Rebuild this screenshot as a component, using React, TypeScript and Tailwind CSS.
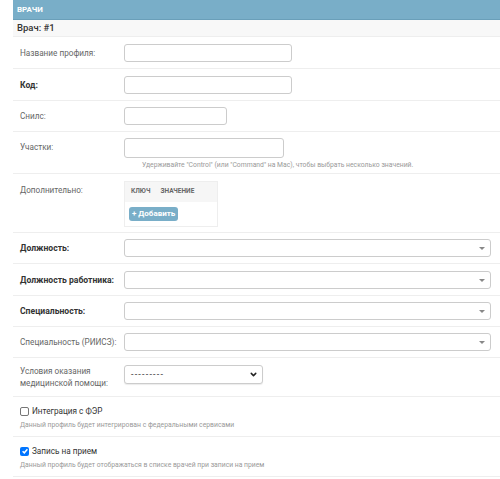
import { ChevronDown } from "lucide-react"

const font = { fontFamily: "Roboto, 'Liberation Sans', sans-serif" }

function Row({ label, bold, children, className = "" }: { label: string; bold?: boolean; children: React.ReactNode; className?: string }) {
  return (
    <div className={`flex border-b border-[#eee] pl-[7px] ${className}`}>
      <label className={`w-[104px] shrink-0 leading-[18px] ${bold ? "text-[8.6px] font-bold text-[#333]" : "text-[8.2px] text-[#666]"}`}>
        {label}
      </label>
      <div className="flex-1 pr-[9px]">{children}</div>
    </div>
  )
}

function TextInput({ w }: { w: string }) {
  return <div className={`h-[18px] rounded-[3px] border border-[#ccc] bg-white ${w}`} />
}

function Select() {
  return (
    <div className="flex h-[18px] items-center justify-end rounded-[3px] border border-[#ccc] bg-white pr-[5px]">
      <span className="h-0 w-0 border-x-[3px] border-t-[3px] border-x-transparent border-t-[#888]" />
    </div>
  )
}

export default function App() {
  return (
    <div className="min-h-[479px] bg-white pl-[13px]" style={font}>
      <h2 className="h-[20px] border-b border-[#6a9fb9] bg-[#79aec8] pl-[4px] text-[8px] font-bold uppercase leading-[19px] text-white">
        Врачи
      </h2>
      <div className="h-[17px] border-b border-[#eee] bg-[#f8f8f8] pl-[4px] text-[9.5px] font-medium leading-[16px] text-[#333]">
        Врач: #1
      </div>

      <Row label="Название профиля:" className="pb-[6px] pt-[7px]">
        <TextInput w="w-[168px]" />
      </Row>
      <Row label="Код:" bold className="pb-[6px] pt-[7px]">
        <TextInput w="w-[168px]" />
      </Row>
      <Row label="Снилс:" className="py-[6px]">
        <TextInput w="w-[103px]" />
      </Row>
      <Row label="Участки:" className="pb-[3px] pt-[6px]">
        <div className="h-[20px] w-[160px] rounded-[3px] border border-[#ccc] bg-white" />
        <p className="ml-[18px] mt-[2px] text-[6.8px] leading-[10px] text-[#999]">
          Удерживайте "Control" (или "Command" на Mac), чтобы выбрать несколько значений.
        </p>
      </Row>
      <Row label="Дополнительно:" className="pb-[5px] pt-[7px]">
        <div className="w-[94px] border border-[#eee]">
          <div className="flex h-[20px] items-center gap-[10px] bg-[#f6f6f6] pl-[6px] text-[6.5px] font-bold uppercase text-[#666]">
            <span>Ключ</span>
            <span>Значение</span>
          </div>
          <div className="flex px-[4px] py-[5px]">
            <button className="h-[14px] rounded-[3px] bg-[#79aec8] px-[3px] text-[8px] font-bold leading-[14px] text-white">
              + Добавить
            </button>
          </div>
        </div>
      </Row>
      <Row label="Должность:" bold className="py-[6px]">
        <Select />
      </Row>
      <Row label="Должность работника:" bold className="pb-[6px] pt-[7px]">
        <Select />
      </Row>
      <Row label="Специальность:" bold className="py-[6px]">
        <Select />
      </Row>
      <Row label="Специальность (РИИСЗ):" className="py-[6px]">
        <Select />
      </Row>
      <div className="flex border-b border-[#eee] pb-[7px] pl-[7px] pt-[6px]">
        <label className="w-[104px] shrink-0 pt-[1px] text-[8.2px] leading-[12px] text-[#666]">
          Условия оказания медицинской помощи:
        </label>
        <div className="mt-[1px] flex h-[19px] w-[139px] items-center justify-between rounded-[3px] border border-[#ccc] bg-white pl-[6px] pr-[4px] text-[9px] text-[#333] shadow-[0_1px_1px_rgba(0,0,0,0.08)]">
          <span className="tracking-[1.2px]">---------</span>
          <ChevronDown className="h-[9px] w-[9px] text-[#222]" strokeWidth={4} />
        </div>
      </div>
      <div className="border-b border-[#eee] pb-[6px] pl-[7px] pt-[8px]">
        <label className="flex items-center gap-[3px] text-[8.2px] leading-[12px] text-[#333]">
          <span className="h-[9px] w-[9px] rounded-[2px] border border-[#767676] bg-white" />
          Интеграция с ФЭР
        </label>
        <p className="mt-[3px] text-[6.8px] leading-[10px] text-[#999]">
          Данный профиль будет интегрирован с федеральными сервисами
        </p>
      </div>
      <div className="border-b border-[#eee] pb-[6px] pl-[7px] pt-[8px]">
        <label className="flex items-center gap-[3px] text-[8.2px] leading-[12px] text-[#333]">
          <span className="flex h-[9px] w-[9px] items-center justify-center rounded-[2px] bg-[#0075ff]">
            <svg viewBox="0 0 10 10" className="h-[8px] w-[8px]">
              <path d="M2 5.2 L4.1 7.3 L8 2.8" fill="none" stroke="white" strokeWidth="1.8" />
            </svg>
          </span>
          Запись на прием
        </label>
        <p className="mt-[3px] text-[6.8px] leading-[10px] text-[#999]">
          Данный профиль будет отображаться в списке врачей при записи на прием
        </p>
      </div>
    </div>
  )
}
